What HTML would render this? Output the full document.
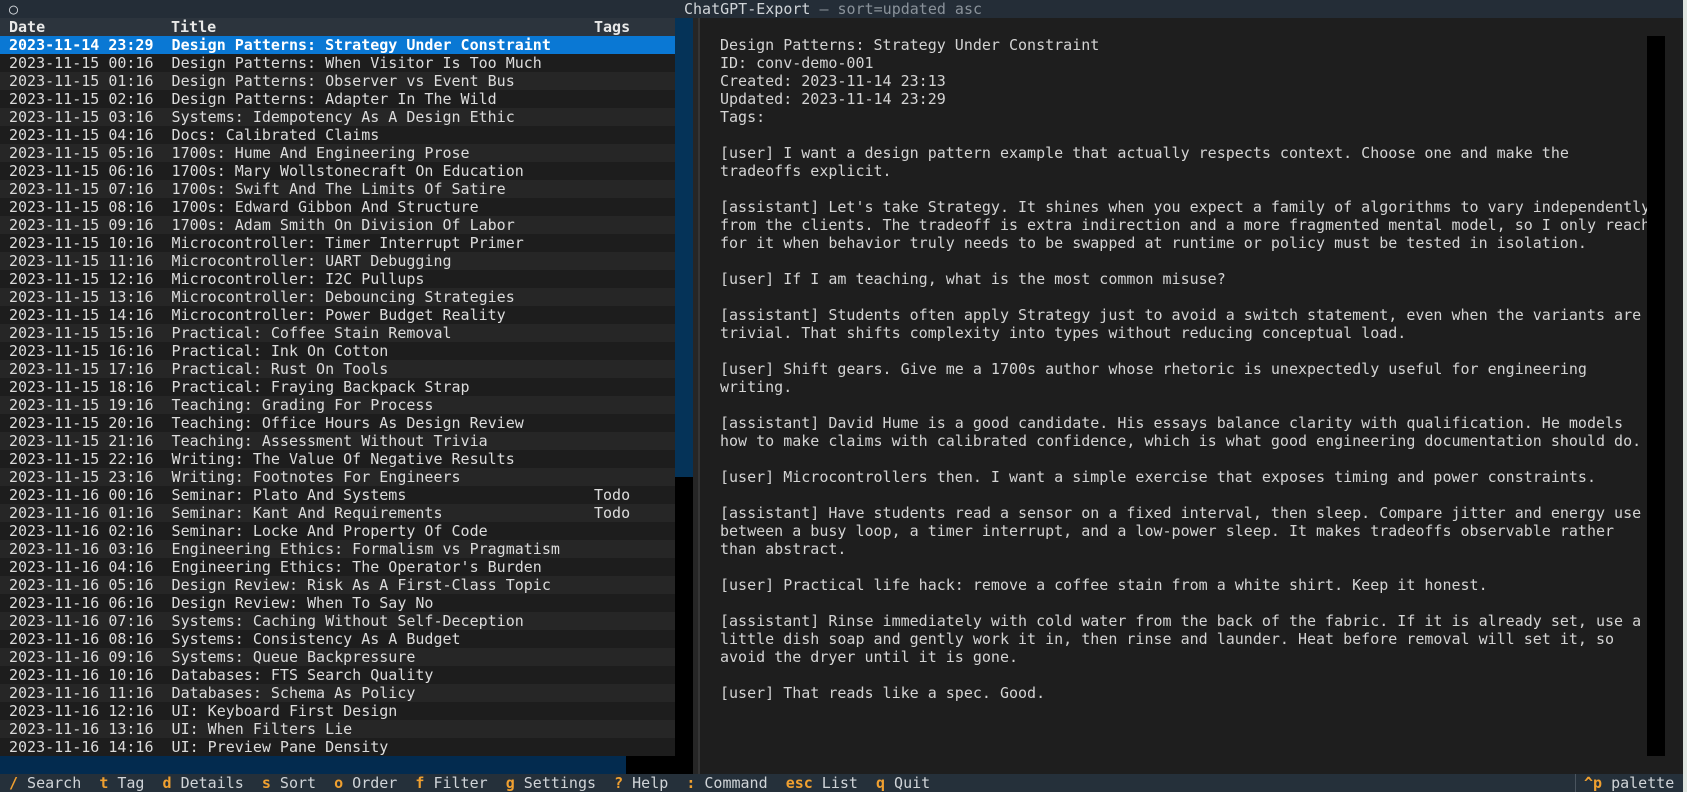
<!DOCTYPE html>
<html><head><meta charset="utf-8"><style>
*{margin:0;padding:0;box-sizing:border-box}
body{width:1687px;height:792px;background:#1e1e1e;overflow:hidden;position:relative;font-family:"DejaVu Sans Mono","Liberation Mono",monospace;font-size:15px;line-height:18px;color:#d4d4d4}
.abs{position:absolute}
pre{font:inherit;white-space:pre}
#title{left:0;top:0;width:1683px;height:18px;background:#242d37;color:#d0d4d8}
#hdr{left:0;top:18px;width:675px;height:18px;background:#2c343d;font-weight:bold;color:#e8e8e8}
.row{height:18px;width:675px;padding-left:9px;color:#dcdcdc}
.row:nth-child(odd){background:#262626}
.row:nth-child(even){background:#1d1d1d}
.row.sel{background:#0a78d4;color:#fff;font-weight:bold}
#foot{left:0;top:774px;width:1683px;height:18px;background:#25303a;color:#d0d4d8}
.k{color:#f0a030;font-weight:bold}
.c{position:absolute;left:9px;top:0}
.t{position:absolute;left:171px;top:0}
.g{position:absolute;left:594px;top:0}
</style></head><body>
<div id="title" class="abs"><pre style="position:absolute;left:9px;top:0">○</pre><pre style="position:absolute;left:684px;top:0">ChatGPT-Export <span style="color:#8a929a">— sort=updated asc</span></pre></div>
<div id="hdr" class="abs"><pre class="c">Date</pre><pre class="t">Title</pre><pre class="g">Tags</pre></div>
<div class="abs" style="left:0;top:36px"><pre>
<div class="row sel">2023-11-14 23:29  Design Patterns: Strategy Under Constraint</div><div class="row">2023-11-15 00:16  Design Patterns: When Visitor Is Too Much</div><div class="row">2023-11-15 01:16  Design Patterns: Observer vs Event Bus</div><div class="row">2023-11-15 02:16  Design Patterns: Adapter In The Wild</div><div class="row">2023-11-15 03:16  Systems: Idempotency As A Design Ethic</div><div class="row">2023-11-15 04:16  Docs: Calibrated Claims</div><div class="row">2023-11-15 05:16  1700s: Hume And Engineering Prose</div><div class="row">2023-11-15 06:16  1700s: Mary Wollstonecraft On Education</div><div class="row">2023-11-15 07:16  1700s: Swift And The Limits Of Satire</div><div class="row">2023-11-15 08:16  1700s: Edward Gibbon And Structure</div><div class="row">2023-11-15 09:16  1700s: Adam Smith On Division Of Labor</div><div class="row">2023-11-15 10:16  Microcontroller: Timer Interrupt Primer</div><div class="row">2023-11-15 11:16  Microcontroller: UART Debugging</div><div class="row">2023-11-15 12:16  Microcontroller: I2C Pullups</div><div class="row">2023-11-15 13:16  Microcontroller: Debouncing Strategies</div><div class="row">2023-11-15 14:16  Microcontroller: Power Budget Reality</div><div class="row">2023-11-15 15:16  Practical: Coffee Stain Removal</div><div class="row">2023-11-15 16:16  Practical: Ink On Cotton</div><div class="row">2023-11-15 17:16  Practical: Rust On Tools</div><div class="row">2023-11-15 18:16  Practical: Fraying Backpack Strap</div><div class="row">2023-11-15 19:16  Teaching: Grading For Process</div><div class="row">2023-11-15 20:16  Teaching: Office Hours As Design Review</div><div class="row">2023-11-15 21:16  Teaching: Assessment Without Trivia</div><div class="row">2023-11-15 22:16  Writing: The Value Of Negative Results</div><div class="row">2023-11-15 23:16  Writing: Footnotes For Engineers</div><div class="row" style="position:relative">2023-11-16 00:16  Seminar: Plato And Systems<span class="g">Todo</span></div><div class="row" style="position:relative">2023-11-16 01:16  Seminar: Kant And Requirements<span class="g">Todo</span></div><div class="row">2023-11-16 02:16  Seminar: Locke And Property Of Code</div><div class="row">2023-11-16 03:16  Engineering Ethics: Formalism vs Pragmatism</div><div class="row">2023-11-16 04:16  Engineering Ethics: The Operator's Burden</div><div class="row">2023-11-16 05:16  Design Review: Risk As A First-Class Topic</div><div class="row">2023-11-16 06:16  Design Review: When To Say No</div><div class="row">2023-11-16 07:16  Systems: Caching Without Self-Deception</div><div class="row">2023-11-16 08:16  Systems: Consistency As A Budget</div><div class="row">2023-11-16 09:16  Systems: Queue Backpressure</div><div class="row">2023-11-16 10:16  Databases: FTS Search Quality</div><div class="row">2023-11-16 11:16  Databases: Schema As Policy</div><div class="row">2023-11-16 12:16  UI: Keyboard First Design</div><div class="row">2023-11-16 13:16  UI: When Filters Lie</div><div class="row">2023-11-16 14:16  UI: Preview Pane Density</div></pre></div>
<div class="abs" style="left:675px;top:18px;width:18px;height:459px;background:#053358"></div>
<div class="abs" style="left:675px;top:477px;width:18px;height:297px;background:#000"></div>
<div class="abs" style="left:0;top:756px;width:675px;height:18px;background:#032b4f"></div>
<div class="abs" style="left:626px;top:756px;width:67px;height:18px;background:#000"></div>
<div class="abs" style="left:693px;top:18px;width:7px;height:756px;background:#262626;border-right:2px solid #353535"></div>
<pre class="abs" style="left:720px;top:36px;color:#d4d4d4">Design Patterns: Strategy Under Constraint
ID: conv-demo-001
Created: 2023-11-14 23:13
Updated: 2023-11-14 23:29
Tags:

[user] I want a design pattern example that actually respects context. Choose one and make the
tradeoffs explicit.

[assistant] Let's take Strategy. It shines when you expect a family of algorithms to vary independently
from the clients. The tradeoff is extra indirection and a more fragmented mental model, so I only reach
for it when behavior truly needs to be swapped at runtime or policy must be tested in isolation.

[user] If I am teaching, what is the most common misuse?

[assistant] Students often apply Strategy just to avoid a switch statement, even when the variants are
trivial. That shifts complexity into types without reducing conceptual load.

[user] Shift gears. Give me a 1700s author whose rhetoric is unexpectedly useful for engineering
writing.

[assistant] David Hume is a good candidate. His essays balance clarity with qualification. He models
how to make claims with calibrated confidence, which is what good engineering documentation should do.

[user] Microcontrollers then. I want a simple exercise that exposes timing and power constraints.

[assistant] Have students read a sensor on a fixed interval, then sleep. Compare jitter and energy use
between a busy loop, a timer interrupt, and a low-power sleep. It makes tradeoffs observable rather
than abstract.

[user] Practical life hack: remove a coffee stain from a white shirt. Keep it honest.

[assistant] Rinse immediately with cold water from the back of the fabric. If it is already set, use a
little dish soap and gently work it in, then rinse and launder. Heat before removal will set it, so
avoid the dryer until it is gone.

[user] That reads like a spec. Good.</pre>
<div class="abs" style="left:1647px;top:36px;width:18px;height:720px;background:#000"></div>
<div class="abs" style="left:1683px;top:0;width:4px;height:792px;background:#dfe5e0"></div>
<div id="foot" class="abs"><pre style="position:absolute;left:9px;top:0"><span class="k">/</span> Search  <span class="k">t</span> Tag  <span class="k">d</span> Details  <span class="k">s</span> Sort  <span class="k">o</span> Order  <span class="k">f</span> Filter  <span class="k">g</span> Settings  <span class="k">?</span> Help  <span class="k">:</span> Command  <span class="k">esc</span> List  <span class="k">q</span> Quit</pre>
<div style="position:absolute;left:1575px;top:0;width:1px;height:18px;background:#4a545e"></div>
<pre style="position:absolute;left:1584px;top:0"><span class="k">^p</span> palette</pre></div>
</body></html>
